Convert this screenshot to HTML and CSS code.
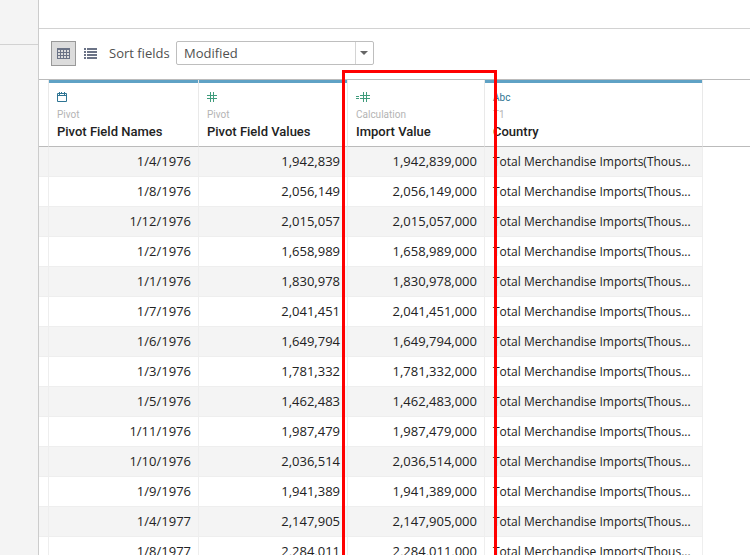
FILE: index.html
```
<!DOCTYPE html>
<html lang="en">
<head>
<meta charset="utf-8">
<title>Data Source</title>
<link rel="stylesheet" href="styles.css">
</head>
<body>
<div class="app">
  <aside class="sidebar"><div class="sidebar-top"></div></aside>
  <main class="main">
    <div class="canvas-edge"></div>
    <div class="toolbar">
      <button class="view-btn active" type="button" aria-label="Grid view">
        <svg width="13" height="11" viewBox="0 0 13 11" shape-rendering="crispEdges"><path fill="#6b7386" fill-rule="evenodd" d="M0 0h13v11H0zM1 2v2h2V2zM4 2v2h2V2zM7 2v2h2V2zM10 2v2h2V2zM1 5v2h2V5zM4 5v2h2V5zM7 5v2h2V5zM10 5v2h2V5zM1 8v2h2V8zM4 8v2h2V8zM7 8v2h2V8zM10 8v2h2V8z"/></svg>
      </button>
      <button class="view-btn" type="button" aria-label="List view">
        <svg width="13" height="11" viewBox="0 0 13 11" shape-rendering="crispEdges"><path fill="#6b7386" d="M0 0h2v2H0zM3 0h10v2H3zM0 3h2v2H0zM3 3h10v2H3zM0 6h2v2H0zM3 6h10v2H3zM0 9h2v2H0zM3 9h10v2H3z"/></svg>
      </button>
      <label class="sort-label" for="sort">Sort fields</label>
      <div class="select-box">
        <select id="sort"><option>Modified</option></select>
      </div>
    </div>
    <div class="grid-area">
      <table class="grid">
        <colgroup><col class="c-gutter"><col class="c-names"><col class="c-values"><col class="c-import"><col class="c-country"><col></colgroup>
        <thead>
          <tr>
            <td></td>
            <th class="source" scope="col">
              <div class="type"><svg width="10" height="10" viewBox="0 0 10 10"><path fill="none" stroke="#2e7493" d="M.5 1.500h9v8h-9zM0 3.500h10M2.500 0v3M4.500 0v2M7.500 0v3"/></svg></div>
              <div class="origin">Pivot</div><div class="name">Pivot Field Names</div>
            </th>
            <th class="source" scope="col">
              <div class="type"><svg width="10" height="10" viewBox="0 0 10 10"><path fill="none" stroke="#3f9c7c" d="M0 3.500h10M0 6.500h10M3.500 0v10M6.500 0v10"/></svg></div>
              <div class="origin">Pivot</div><div class="name">Pivot Field Values</div>
            </th>
            <th scope="col">
              <div class="type"><svg width="14" height="10" viewBox="0 0 14 10"><path fill="none" stroke="#3f9c7c" d="M0 4.500h3M0 6.500h3M4 3.500h10M4 6.500h10M7.500 0v10M10.500 0v10"/></svg></div>
              <div class="origin">Calculation</div><div class="name">Import Value</div>
            </th>
            <th class="source" scope="col">
              <div class="type">Abc</div>
              <div class="origin">T1</div><div class="name">Country</div>
            </th>
            <td></td>
          </tr>
        </thead>
        <tbody>
          <tr><td></td><td>1/4/1976</td><td>1,942,839</td><td>1,942,839,000</td><td class="text">Total Merchandise Imports(Thous...</td><td></td></tr>
          <tr><td></td><td>1/8/1976</td><td>2,056,149</td><td>2,056,149,000</td><td class="text">Total Merchandise Imports(Thous...</td><td></td></tr>
          <tr><td></td><td>1/12/1976</td><td>2,015,057</td><td>2,015,057,000</td><td class="text">Total Merchandise Imports(Thous...</td><td></td></tr>
          <tr><td></td><td>1/2/1976</td><td>1,658,989</td><td>1,658,989,000</td><td class="text">Total Merchandise Imports(Thous...</td><td></td></tr>
          <tr><td></td><td>1/1/1976</td><td>1,830,978</td><td>1,830,978,000</td><td class="text">Total Merchandise Imports(Thous...</td><td></td></tr>
          <tr><td></td><td>1/7/1976</td><td>2,041,451</td><td>2,041,451,000</td><td class="text">Total Merchandise Imports(Thous...</td><td></td></tr>
          <tr><td></td><td>1/6/1976</td><td>1,649,794</td><td>1,649,794,000</td><td class="text">Total Merchandise Imports(Thous...</td><td></td></tr>
          <tr><td></td><td>1/3/1976</td><td>1,781,332</td><td>1,781,332,000</td><td class="text">Total Merchandise Imports(Thous...</td><td></td></tr>
          <tr><td></td><td>1/5/1976</td><td>1,462,483</td><td>1,462,483,000</td><td class="text">Total Merchandise Imports(Thous...</td><td></td></tr>
          <tr><td></td><td>1/11/1976</td><td>1,987,479</td><td>1,987,479,000</td><td class="text">Total Merchandise Imports(Thous...</td><td></td></tr>
          <tr><td></td><td>1/10/1976</td><td>2,036,514</td><td>2,036,514,000</td><td class="text">Total Merchandise Imports(Thous...</td><td></td></tr>
          <tr><td></td><td>1/9/1976</td><td>1,941,389</td><td>1,941,389,000</td><td class="text">Total Merchandise Imports(Thous...</td><td></td></tr>
          <tr><td></td><td>1/4/1977</td><td>2,147,905</td><td>2,147,905,000</td><td class="text">Total Merchandise Imports(Thous...</td><td></td></tr>
          <tr><td></td><td>1/8/1977</td><td>2,284,011</td><td>2,284,011,000</td><td class="text">Total Merchandise Imports(Thous...</td><td></td></tr>
        </tbody>
      </table>
      <div class="highlight"></div>
    </div>
  </main>
</div>
</body>
</html>
```
FILE: styles.css
```
* { box-sizing: border-box; }
body {
  margin: 0;
  background: #fff;
  color: #222;
  font-family: "Open Sans", sans-serif;
  font-size: 13px;
}
.app { display: flex; height: 100vh; overflow: hidden; }
.sidebar { flex: none; width: 39px; background: #f4f4f4; border-right: 1px solid #ccc; }
.sidebar-top { height: 45px; border-bottom: 1px solid #d2d2d2; }
.main { flex: 1; min-width: 0; }
.canvas-edge { height: 29px; border-bottom: 1px solid #d2d2d2; }
.toolbar {
  display: flex;
  align-items: center;
  height: 51px;
  padding: 0 12px 2px;
  border-bottom: 1px solid #bbb;
}
.view-btn {
  display: flex;
  align-items: center;
  justify-content: center;
  width: 25px;
  height: 25px;
  margin-right: 2px;
  padding: 0;
  border: 1px solid transparent;
  background: none;
}
.view-btn.active { background: #dcdcdc; border-color: #999; }
.sort-label {
  width: 60px;
  margin: 0 7px 0 4px;
  color: #505050;
  font-size: 13px;
  white-space: nowrap;
}
.select-box { position: relative; width: 198px; height: 24px; }
.select-box select {
  appearance: none;
  width: 100%;
  height: 100%;
  padding: 0 24px 0 7px;
  border: 1px solid #bebebe;
  border-radius: 2px;
  background: #fff;
  color: #505050;
  font-family: "Open Sans", sans-serif;
  font-size: 13px;
}
.select-box::before {
  content: "";
  position: absolute;
  top: 1px;
  bottom: 1px;
  right: 18px;
  border-left: 1px solid #d4d4d4;
  pointer-events: none;
}
.select-box::after {
  content: "";
  position: absolute;
  top: 10px;
  right: 6px;
  border: 4px solid transparent;
  border-top-color: #666;
  border-bottom: 0;
  pointer-events: none;
}
.grid-area { position: relative; }
.grid { width: 100%; table-layout: fixed; border-collapse: separate; border-spacing: 0; }
.c-gutter { width: 10px; }
.c-names { width: 150px; }
.c-values { width: 149px; }
.c-import { width: 137px; }
.c-country { width: 218px; }
.grid thead th, .grid thead td {
  height: 67px;
  padding: 12px 8px 0;
  border-right: 1px solid #e9e9e9;
  border-bottom: 1px solid #bbb;
  text-align: left;
  vertical-align: top;
  font-family: Roboto, sans-serif;
  font-weight: 400;
}
.grid thead th.source { 
  background: linear-gradient(#5fa2c5, #5fa2c5) 0 0 / 100% 3px no-repeat padding-box;
}
.type { height: 15px; color: #2e7493; font-size: 10px; line-height: 12px; }
.type svg { display: block; }
.origin { height: 16px; color: #b4b4b4; font-size: 10px; line-height: 16px; }
.name { color: #222; font-size: 13px; font-weight: 500; line-height: 18px; white-space: nowrap; }
.grid tbody td {
  height: 30px;
  padding: 0 7px 1px;
  border-right: 1px solid #eee;
  border-bottom: 1px solid #eee;
  text-align: right;
  line-height: 20px;
  white-space: nowrap;
}
.grid tbody td.text { padding: 0 8px; text-align: left; font-size: 12px; }
.grid tbody tr:nth-child(odd) td { background: #f4f4f4; }
.grid thead td:last-child { border-right: 0; }
.grid tbody tr td:last-child { border: 0; background: none; }
.highlight {
  position: absolute;
  top: -10px;
  bottom: -10px;
  left: 303px;
  width: 155px;
  border: 3px solid #f00;
  pointer-events: none;
}
```
